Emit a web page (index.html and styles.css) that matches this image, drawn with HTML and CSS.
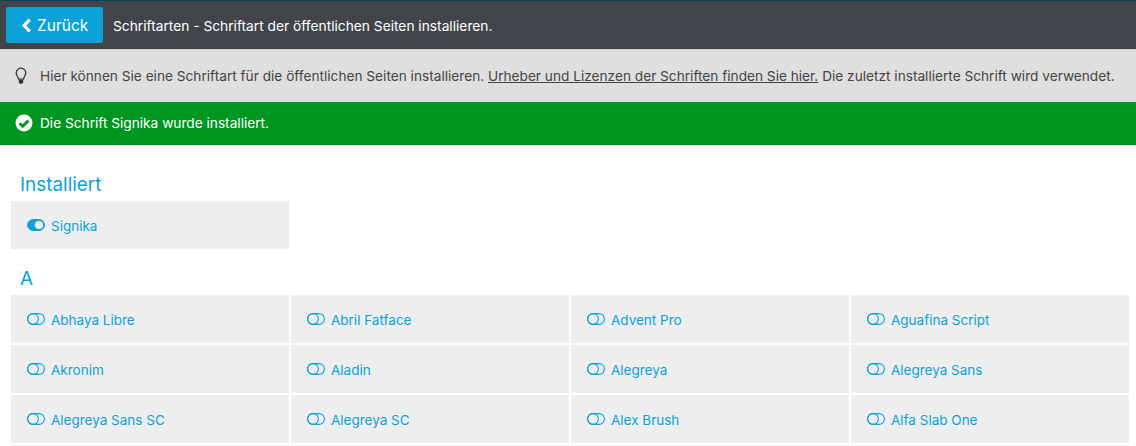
FILE: index.html
```html
<!DOCTYPE html>
<html lang="de">
<head>
<meta charset="utf-8">
<title>Schriftarten</title>
<link rel="stylesheet" href="styles.css">
</head>
<body>
<header class="topbar">
  <a class="back" href="#"><svg class="chev" viewBox="0 0 10 14"><path d="M8 1.500 2.800 7 8 12.500" fill="none" stroke="currentColor" stroke-width="3"/></svg>Zurück</a>
  <span class="title">Schriftarten - Schriftart der öffentlichen Seiten installieren.</span>
</header>
<div class="info">
  <svg class="bulb" viewBox="0 0 12 18"><path d="M6 1.200a4.800 4.800 0 0 0-4.800 4.800c0 2.400 1.900 3.400 2.300 6.200h5c.4-2.800 2.300-3.800 2.300-6.200A4.800 4.800 0 0 0 6 1.200Z" fill="none" stroke="#333" stroke-width="1.300"/><path d="M3.800 13h4.400v2.200l-1.200 1.500H5l-1.200-1.500Z" fill="#333"/></svg>
  <p>Hier können Sie eine Schriftart für die öffentlichen Seiten installieren. <a href="#">Urheber und Lizenzen der Schriften finden Sie hier.</a> Die zuletzt installierte Schrift wird verwendet.</p>
</div>
<div class="success">
  <svg class="check" viewBox="0 0 18 18"><circle cx="9" cy="9" r="8.500" fill="#fff"/><path d="M4.600 9.200 7.700 12.300 13.400 6.600" fill="none" stroke="#00961f" stroke-width="2.900"/></svg>
  <span>Die Schrift Signika wurde installiert.</span>
</div>
<main class="content">
  <h2>Installiert</h2>
  <div class="grid">
    <a class="font" href="#"><svg class="toggle" viewBox="0 0 18 12"><path d="M6 .6h6a5.400 5.400 0 0 1 0 10.800H6A5.400 5.400 0 0 1 6 .6Z" fill="#0ea2d6" stroke="#0ea2d6"/><circle cx="12" cy="6" r="4.100" fill="#eee"/></svg>Signika</a>
  </div>
  <h2 class="letter">A</h2>
  <div class="grid">
    <a class="font" href="#"><svg class="toggle" viewBox="0 0 18 12"><use href="#off"/></svg>Abhaya Libre</a>
    <a class="font" href="#"><svg class="toggle" viewBox="0 0 18 12"><use href="#off"/></svg>Abril Fatface</a>
    <a class="font" href="#"><svg class="toggle" viewBox="0 0 18 12"><use href="#off"/></svg>Advent Pro</a>
    <a class="font" href="#"><svg class="toggle" viewBox="0 0 18 12"><use href="#off"/></svg>Aguafina Script</a>
    <a class="font" href="#"><svg class="toggle" viewBox="0 0 18 12"><use href="#off"/></svg>Akronim</a>
    <a class="font" href="#"><svg class="toggle" viewBox="0 0 18 12"><use href="#off"/></svg>Aladin</a>
    <a class="font" href="#"><svg class="toggle" viewBox="0 0 18 12"><use href="#off"/></svg>Alegreya</a>
    <a class="font" href="#"><svg class="toggle" viewBox="0 0 18 12"><use href="#off"/></svg>Alegreya Sans</a>
    <a class="font" href="#"><svg class="toggle" viewBox="0 0 18 12"><use href="#off"/></svg>Alegreya Sans SC</a>
    <a class="font" href="#"><svg class="toggle" viewBox="0 0 18 12"><use href="#off"/></svg>Alegreya SC</a>
    <a class="font" href="#"><svg class="toggle" viewBox="0 0 18 12"><use href="#off"/></svg>Alex Brush</a>
    <a class="font" href="#"><svg class="toggle" viewBox="0 0 18 12"><use href="#off"/></svg>Alfa Slab One</a>
    <a class="font" href="#"></a><a class="font" href="#"></a><a class="font" href="#"></a><a class="font" href="#"></a>
  </div>
</main>
<svg class="defs" width="0" height="0"><defs><g id="off" fill="none" stroke="#0ea2d6" stroke-width="1.100"><path d="M6 .6h6a5.400 5.400 0 0 1 0 10.800H6A5.400 5.400 0 0 1 6 .6Z"/><circle cx="6" cy="6" r="5.400"/></g></defs></svg>
</body>
</html>
```
FILE: styles.css
```css
* { box-sizing: border-box; }
html, body { margin: 0; height: 446px; overflow: hidden; }
body { font-family: Inter, "Liberation Sans", sans-serif; font-size: 13px; color: #444; background: #fff; }
.topbar { height: 50px; display: flex; align-items: center; gap: 10px; padding: 1px 0 0 6px; background: #414549; border-top: 1px solid #0d3f5a; border-bottom: 1px solid #cfcfcf; }
.back { width: 97px; height: 36px; margin-top: -1px; display: flex; align-items: center; padding-left: 15px; background: #0ba2d8; color: #fff; border-radius: 2px; font-size: 15.500px; text-decoration: none; }
.chev { width: 11px; height: 15px; margin-right: 5px; }
.title { color: #fff; font-size: 13.750px; }
.info { height: 52px; display: flex; align-items: center; padding-left: 15px; background: #dfdfdf; }
.bulb { width: 12px; height: 18px; flex: none; margin-right: 13px; }
.info p { margin: 0; font-size: 13.670px; white-space: nowrap; color: #444; }
.info a { color: #444; }
.success { height: 43px; display: flex; align-items: center; padding-left: 15px; background: #00961f; color: #fff; font-size: 13.680px; border-bottom: 1px solid #008a1c; }
.check { width: 18px; height: 18px; margin-right: 7px; }
.content { padding: 0 7px 0 11px; }
h2 { margin: 0; height: 56px; padding: 28px 0 0 9px; font-size: 18.900px; line-height: 23px; font-weight: 400; color: #0ba2d8; }
h2.letter { height: 46px; padding-top: 18px; }
.grid { display: grid; grid-template-columns: repeat(4, 278px); grid-auto-rows: 48px; gap: 2px; }
.font { display: flex; align-items: center; gap: 6px; padding: 2px 0 0 16px; background-color: #eee; background-image: radial-gradient(circle, #e8e8e8 .6px, transparent .8px); background-size: 10px 10px; color: #0ba2d8; font-size: 13.500px; text-decoration: none; }
.toggle { width: 18px; height: 12px; flex: none; margin-top: -2px; }
.defs { position: absolute; }
```
